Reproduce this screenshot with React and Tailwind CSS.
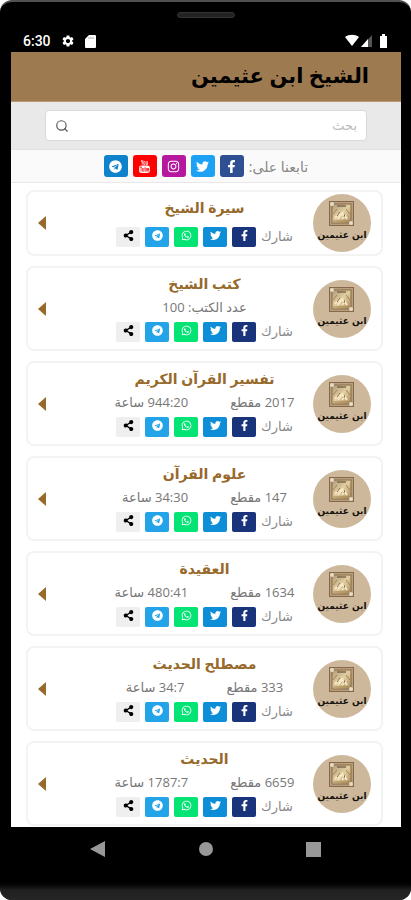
import {
    FaFacebookF,
    FaInstagram,
    FaShareAlt,
    FaTelegram,
    FaTwitter,
    FaWhatsapp,
} from "react-icons/fa";
import { MdSettings } from "react-icons/md";
import { TfiYoutube } from "react-icons/tfi";
import { FiSearch } from "react-icons/fi";

const FOLLOW_LINKS = [
    { name: "Facebook", icon: FaFacebookF, color: "bg-[#2f4f93]" },
    { name: "Twitter", icon: FaTwitter, color: "bg-[#1da1f2]" },
    { name: "Instagram", icon: FaInstagram, color: "bg-[#b5179e]" },
    { name: "YouTube", icon: TfiYoutube, color: "bg-[#fe0000]" },
    { name: "Telegram", icon: FaTelegram, color: "bg-[#0f82cb]" },
];

const SHARE_LINKS = [
    { name: "Facebook", icon: FaFacebookF, color: "bg-[#1a347b] text-white" },
    { name: "Twitter", icon: FaTwitter, color: "bg-[#0d8ed6] text-white" },
    { name: "WhatsApp", icon: FaWhatsapp, color: "bg-[#03e474] text-white" },
    { name: "Telegram", icon: FaTelegram, color: "bg-[#23a4e8] text-white" },
    { name: "Share", icon: FaShareAlt, color: "bg-[#efefef] text-black" },
];

const SECTIONS = [
    { title: "سيرة الشيخ", stats: [] },
    { title: "كتب الشيخ", stats: ["عدد الكتب: 100"] },
    { title: "تفسير القرآن الكريم", stats: ["2017 مقطع", "944:20 ساعة"] },
    { title: "علوم القرآن", stats: ["147 مقطع", "34:30 ساعة"] },
    { title: "العقيدة", stats: ["1634 مقطع", "480:41 ساعة"] },
    { title: "مصطلح الحديث", stats: ["333 مقطع", "34:7 ساعة"] },
    { title: "الحديث", stats: ["6659 مقطع", "1787:7 ساعة"] },
];

function StatusBar() {
    return (
        <div dir="ltr" className="flex h-[52px] flex-col justify-between px-3 pb-[3px] text-white">
            <div className="mx-auto mt-3 h-[6px] w-[58px] rounded-full border border-[#333] bg-[#222]" />
            <div className="flex h-4 items-center gap-[10px]">
                <span className="font-['Roboto',sans-serif] text-[14px] leading-4 font-medium">6:30</span>
                <MdSettings className="size-[14px]" />
                <svg viewBox="0 0 11 13" className="h-[13px] w-[11px]">
                    <path d="M4 0H10Q11 0 11 1V12Q11 13 10 13H1Q0 13 0 12V4Z" fill="#fff" />
                    <path d="M4 2V4M6 2V4M8 2V4" stroke="#aaa" />
                </svg>
                <svg viewBox="0 0 44 14" className="ml-auto h-[14px] w-[44px]">
                    <path d="M0 3C4 0 10 0 14 3L7 12Z" fill="#fff" />
                    <path d="M27 1V13H16Z" fill="#555" />
                    <path d="M23 5V13H16Z" fill="#fff" />
                    <path d="M35 2H37V0H40V2H42V14H35Z" fill="#fff" />
                </svg>
            </div>
        </div>
    );
}

function Avatar() {
    return (
        <svg viewBox="0 0 58 58" className="size-[58px] shrink-0" role="img" aria-label="ابن عثيمين">
            <defs>
                <linearGradient id="gold" x1="0" y1="0" x2="1" y2="1">
                    <stop offset="0" stopColor="#b09a7a" />
                    <stop offset="0.5" stopColor="#e0cda0" />
                    <stop offset="1" stopColor="#a78a5c" />
                </linearGradient>
            </defs>
            <circle cx="29" cy="29" r="29" fill="#cdb89c" />
            <rect x="16" y="7" width="25" height="25" fill="#86694a" />
            <rect x="17" y="8" width="23" height="23" fill="#b79e7c" />
            <rect x="19" y="10" width="19" height="19" fill="url(#gold)" stroke="#8a6c48" />
            <path d="M24 12H33" stroke="#57432c" />
            <path d="M20 20L24 15M37 20L33 15M20 27H37" stroke="#a5854f" />
            <path d="M22 24Q28 15 34 25M25 25L30 18M29 25L33 20" stroke="#f6e8c6" strokeWidth="2" fill="none" />
            <path d="M24 22L27 18M31 23L32 20" stroke="#8b6c3f" />
            <circle cx="19" cy="10" r="2" fill="#e8dcc4" />
            <circle cx="38" cy="29" r="2" fill="#e8dcc4" />
            <text
                x="29"
                y="44"
                textAnchor="middle"
                direction="rtl"
                fill="#15110d"
                className="font-['DejaVu_Sans',sans-serif] text-[9px] font-bold"
            >
                ابن عثيمين
            </text>
        </svg>
    );
}

function SectionCard({ title, stats }) {
    return (
        <article className="flex items-center rounded-lg border-2 border-[#f3f3f3] bg-white px-[10px]">
            <Avatar />
            <div className="flex min-w-0 flex-1 flex-col items-center pt-[2px] pb-[3px]">
                <h2 className="text-[14px] leading-7 font-bold whitespace-nowrap text-[#97692b]">{title}</h2>
                {stats.length > 0 ? (
                    <div className="flex h-[19px] items-center justify-center gap-[42px] text-[13px] whitespace-nowrap text-[#777]">
                        {stats.map((stat) => (
                            <span key={stat}>{stat}</span>
                        ))}
                    </div>
                ) : null}
                <div className="flex h-[29px] items-center gap-[5px]">
                    <span className="text-[13px] text-[#888]">شارك</span>
                    {SHARE_LINKS.map(({ name, icon: Icon, color }) => (
                        <a
                            key={name}
                            href="#"
                            aria-label={name}
                            className={`flex h-5 w-6 items-start justify-center rounded-xs pt-[3px] ${color}`}
                        >
                            <Icon className="size-[11px]" />
                        </a>
                    ))}
                </div>
            </div>
            {/* wide hit area keeps the text column clear of the arrow */}
            <a href="#" aria-label={title} className="flex w-[58px] shrink-0 justify-end">
                <svg viewBox="0 0 8 14" className="h-[14px] w-2">
                    <path d="M8 0V14L0 7Z" fill="#97692b" />
                </svg>
            </a>
        </article>
    );
}

function NavBar() {
    return (
        <nav dir="ltr" className="flex h-11 items-center justify-between pr-[80px] pl-[79px] text-[#989898]">
            <button type="button" aria-label="Back">
                <svg viewBox="0 0 15 16" className="h-4 w-[15px]" fill="currentColor">
                    <path d="M15 0V16L0 8Z" />
                </svg>
            </button>
            <button type="button" aria-label="Home" className="size-[14px] rounded-full bg-current" />
            <button type="button" aria-label="Recents" className="size-[15px] bg-current" />
        </nav>
    );
}

export default function App() {
    return (
        <div className="min-h-screen bg-white">
            <div
                dir="rtl"
                className="flex min-h-screen flex-col overflow-hidden rounded-xl border-t-2 border-[#505050] bg-black font-['Open_Sans','DejaVu_Sans',sans-serif]"
            >
                <div className="-mt-[2px] mr-[10px] ml-[11px]">
                    <StatusBar />
                    <main className="bg-white">
                        <header className="flex h-[50px] items-center border-b border-[#b99a74] bg-[#9e7a50] pr-8 pb-1">
                            <h1 className="text-[21px] leading-8 font-bold text-black">الشيخ ابن عثيمين</h1>
                        </header>

                        <form className="border-b border-[#e2e2e2] bg-[#e9e9e9] px-[34px] py-2">
                            <div className="flex h-[31px] items-center rounded-sm border border-[#d9d9d9] bg-white px-[9px]">
                                <input
                                    type="search"
                                    aria-label="بحث"
                                    placeholder="بحث"
                                    className="min-w-0 flex-1 text-[13px] outline-none placeholder:text-[#bbb]"
                                />
                                <button type="submit" aria-label="بحث">
                                    <FiSearch className="size-[14px] text-[#555]" />
                                </button>
                            </div>
                        </form>

                        <div className="flex h-[33px] items-center justify-center gap-[5px] border-b border-[#e8e8e8] bg-[#fafafa]">
                            <span className="text-[14px] text-[#888]">تابعنا على:</span>
                            {FOLLOW_LINKS.map(({ name, icon: Icon, color }) => (
                                <a
                                    key={name}
                                    href="#"
                                    aria-label={name}
                                    className={`flex h-[22px] w-6 items-center justify-center rounded-[3px] text-white ${color}`}
                                >
                                    <Icon className="size-[13px]" />
                                </a>
                            ))}
                        </div>

                        <section className="flex flex-col gap-[10px] pt-[7px] pr-[18px] pb-px pl-[15px]">
                            {SECTIONS.map((section) => (
                                <SectionCard key={section.title} {...section} />
                            ))}
                        </section>
                    </main>
                    <NavBar />
                </div>
                <div className="mt-auto h-5 bg-gradient-to-b from-black via-[#202020] to-[#262626]" />
            </div>
        </div>
    );
}
